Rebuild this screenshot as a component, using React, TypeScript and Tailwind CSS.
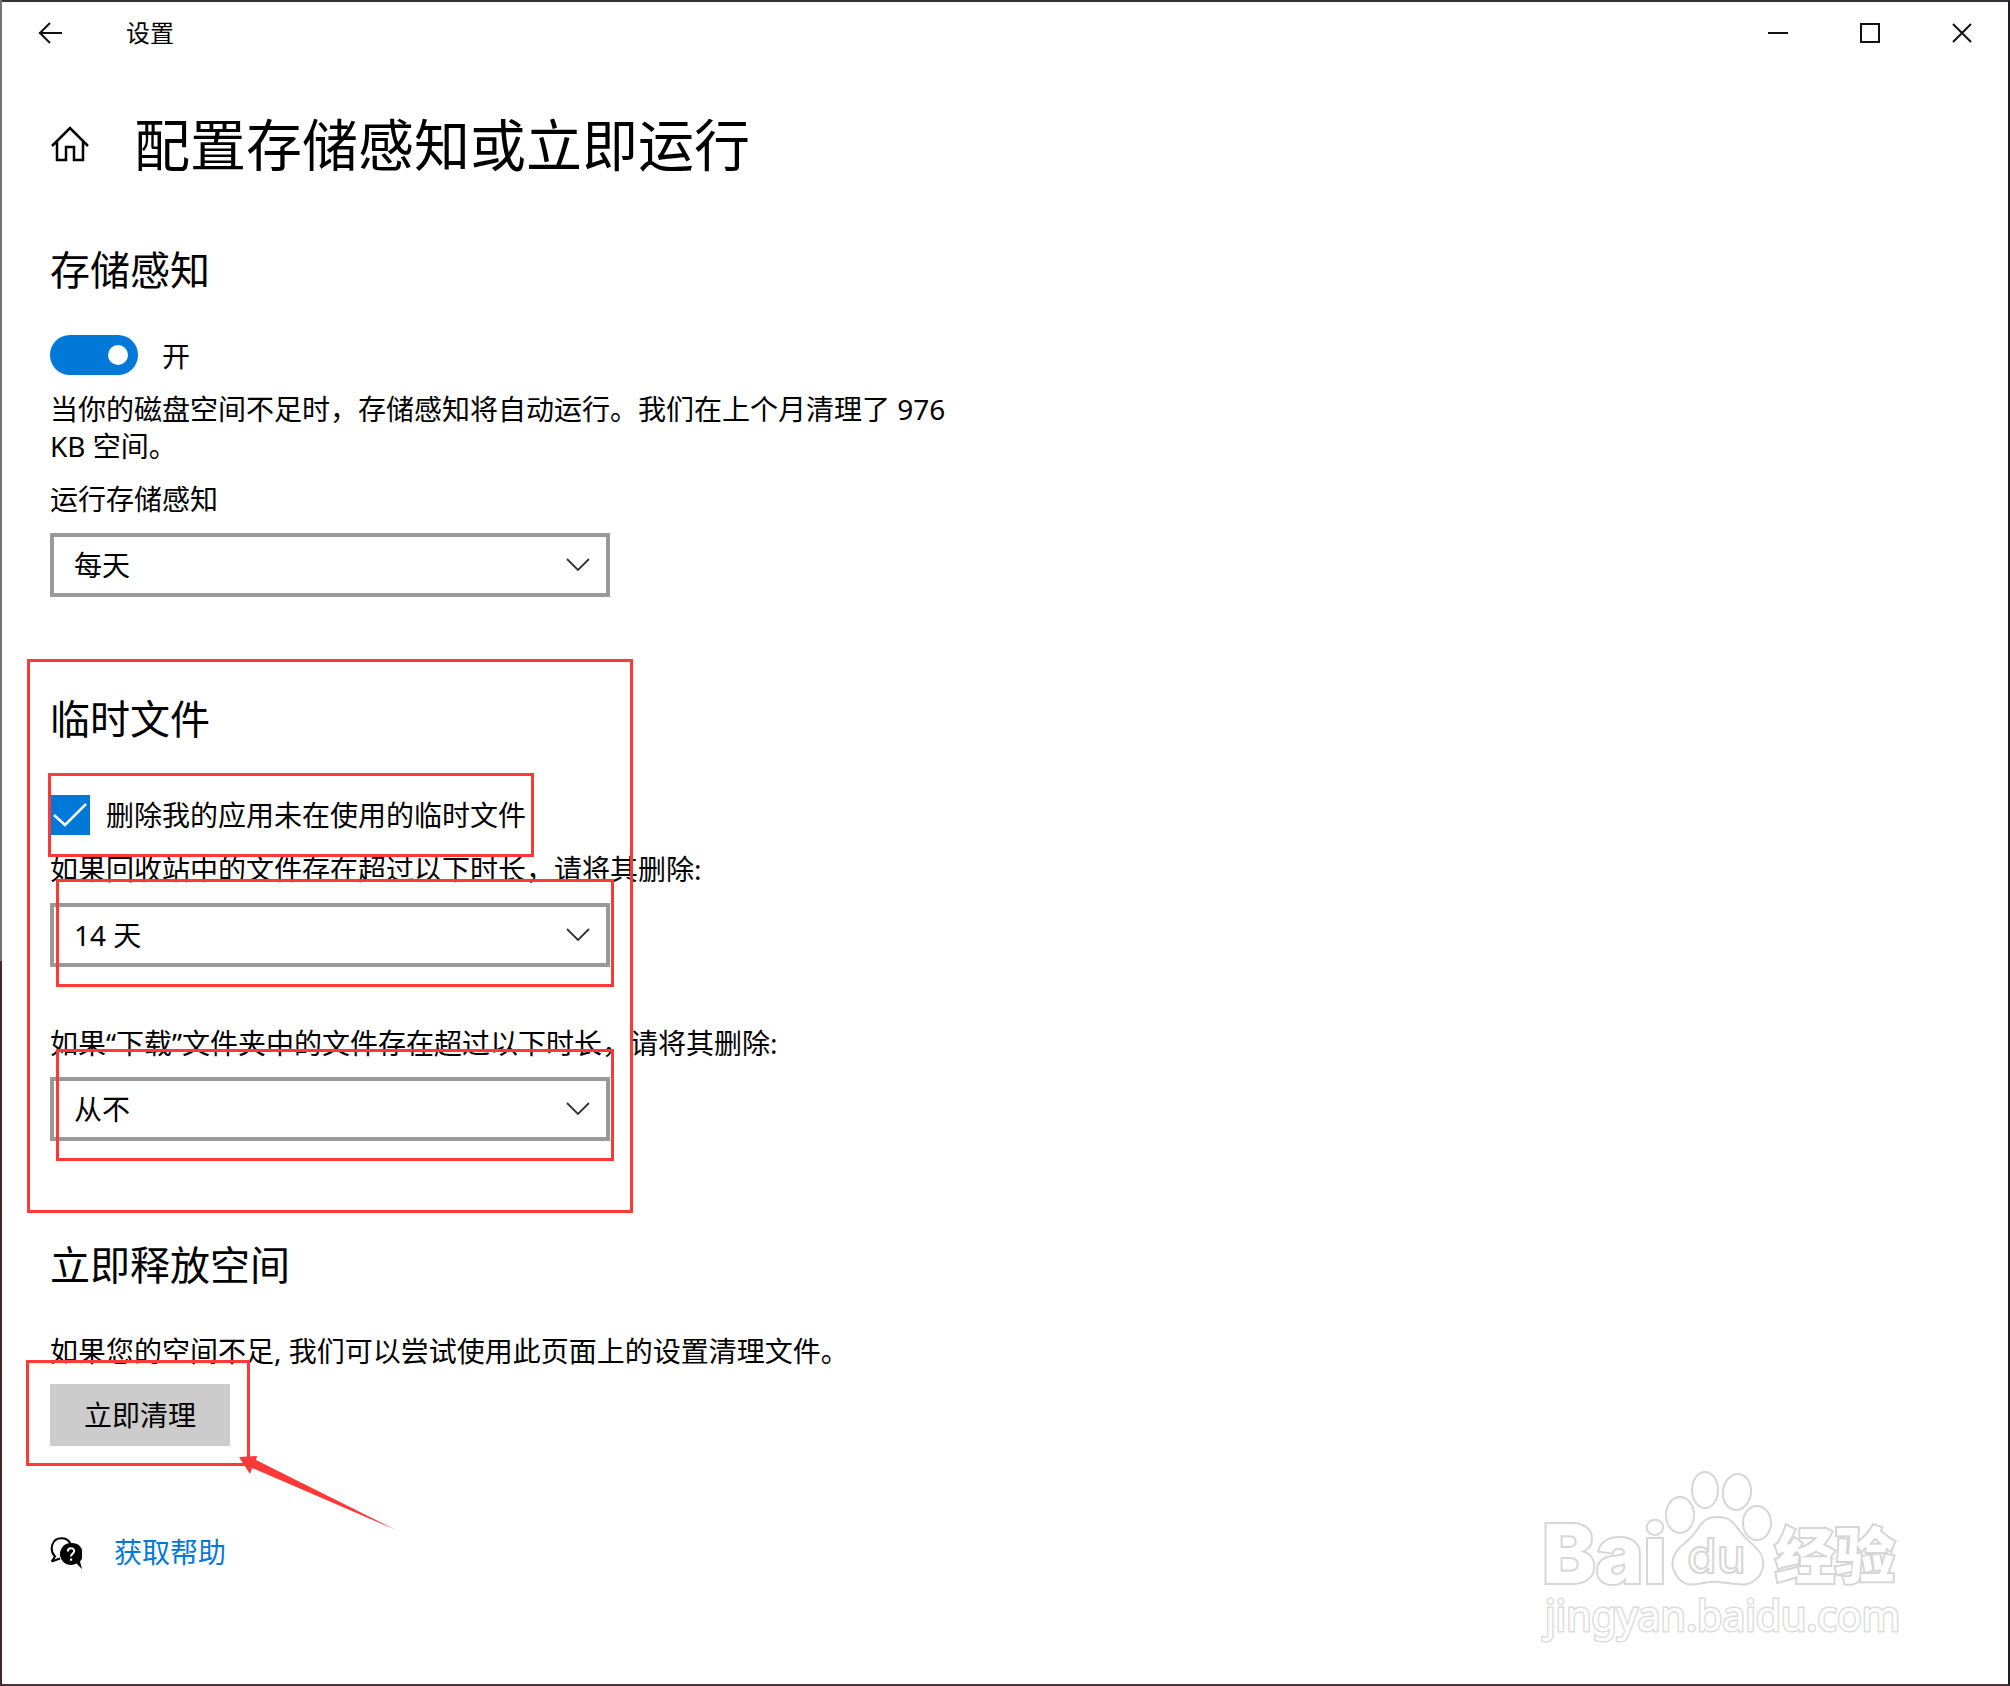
import { useState, type ReactNode } from 'react';

type SelectFieldProps = {
  id: string;
  label: string;
  value: string;
  options: string[];
  marker?: ReactNode;
  onChange: (value: string) => void;
};

const RUN_OPTIONS = ['每天', '每周', '每月', '可用磁盘空间不足时'];
const RECYCLE_OPTIONS = ['从不', '1 天', '14 天', '30 天', '60 天'];
const DOWNLOAD_OPTIONS = ['从不', '1 天', '14 天', '30 天', '60 天'];

// red rectangle drawn over the content
function Marker({ className }: { className: string }) {
  return <div className={`pointer-events-none absolute border-3 border-[#ff3838] ${className}`} />;
}

function SelectField({ id, label, value, options, marker, onChange }: SelectFieldProps) {
  return (
    <div className="flex flex-col gap-4">
      <label htmlFor={id} className="leading-9">{label}</label>
      <div className="relative w-[560px] max-w-full">
        <select
          id={id}
          value={value}
          onChange={(e) => onChange(e.target.value)}
          className="block h-16 w-full appearance-none border-4 border-[#999] bg-white pl-5 pr-16 outline-none"
        >
          {options.map((o) => <option key={o}>{o}</option>)}
        </select>
        <svg className="pointer-events-none absolute right-5 top-6 h-4 w-6" viewBox="0 0 24 16" fill="none" stroke="#333" strokeWidth="1.800">
          <path d="M1 2l11 11L23 2" />
        </svg>
        {marker}
      </div>
    </div>
  );
}

function TitleBar() {
  return (
    <header className="flex h-[62px] items-center justify-between">
      <div className="flex items-center">
        <button type="button" aria-label="返回" className="flex h-full w-24 items-center justify-center">
          <svg className="h-6 w-6" viewBox="0 0 24 24" fill="none" stroke="#111" strokeWidth="2">
            <path d="M24 12H1M12 2L2 12l10 10" />
          </svg>
        </button>
        <span className="pl-7 text-2xl">设置</span>
      </div>
      <div className="flex">
        <button type="button" aria-label="最小化" className="flex h-full w-23 items-center justify-center">
          <svg className="h-5 w-5" viewBox="0 0 20 20" stroke="#111" strokeWidth="2"><path d="M0 10h20" /></svg>
        </button>
        <button type="button" aria-label="最大化" className="flex h-full w-23 items-center justify-center">
          <svg className="h-5 w-5" viewBox="0 0 20 20" fill="none" stroke="#111" strokeWidth="2"><path d="M1 1h18v18H1z" /></svg>
        </button>
        <button type="button" aria-label="关闭" className="flex h-full w-23 items-center justify-center">
          <svg className="h-5 w-5" viewBox="0 0 20 20" stroke="#111" strokeWidth="2"><path d="M1 1l18 18M19 1L1 19" /></svg>
        </button>
      </div>
    </header>
  );
}

function HelpIcon() {
  return (
    <svg className="h-8 w-8" viewBox="0 0 32 32">
      <path d="M1.500 24.500L5 19.500C-1 13 1.500 1.200 11.500 1.200c5 0 7.600 2.500 8.800 5.300M1.500 24.500L10 21.500" fill="none" stroke="#000" strokeWidth="2" />
      <path d="M21 6a11 11 0 1 0 5.500 20.500L32 32l-2-7.500A11 11 0 0 0 21 6z" />
      <path d="M17.800 14.500c0-4.500 6.600-4.200 6.400-.4-.1 2.300-3.200 2.400-3.200 5.400" fill="none" stroke="#fff" strokeWidth="2" />
      <path d="M20 21.500h2.200v2.200H20z" fill="#fff" />
    </svg>
  );
}

function Watermark() {
  return (
    <svg
      className="pointer-events-none absolute bottom-9 right-22 h-45 w-100"
      viewBox="0 0 400 180"
      fill="#fff"
      stroke="#d6d6d6"
      strokeWidth="2"
      aria-label="Baidu 经验"
    >
      <g strokeWidth="4" paintOrder="stroke">
        <text x="22" y="115" fontFamily="Inter, 'Liberation Sans', sans-serif" fontSize="81" fontWeight="800">Bai</text>
        <text x="255" y="110" fontFamily="'Noto Sans CJK SC', sans-serif" fontSize="60" fontWeight="900">经验</text>
      </g>
      <ellipse cx="160" cy="47" rx="14" ry="18" />
      <ellipse cx="185" cy="22" rx="13" ry="18" />
      <ellipse cx="217" cy="24" rx="14" ry="18" transform="rotate(8 217 24)" />
      <ellipse cx="237" cy="55" rx="14" ry="17" />
      <path d="M198 49c-20 0-16 13-33 26-12 9-16 20-9 32 12 18 25 5 42 7 17 1 31 8 42-7 8-14 1-24-9-32-16-13-15-26-33-26z" />
      <text x="167" y="105" fontFamily="Inter, sans-serif" fontSize="48" fontWeight="500" strokeWidth="2">du</text>
      <text x="25" y="163" fontFamily="'Noto Sans', sans-serif" fontSize="41" strokeWidth="3" stroke="#dcdcdc" paintOrder="stroke">jingyan.baidu.com</text>
    </svg>
  );
}

export default function App() {
  const [enabled, setEnabled] = useState(true);
  const [cleanTemp, setCleanTemp] = useState(true);
  const [runWhen, setRunWhen] = useState('每天');
  const [recycle, setRecycle] = useState('14 天');
  const [downloads, setDownloads] = useState('从不');

  return (
    <div
      lang="zh-CN"
      className="flex min-h-screen bg-linear-to-b from-[#747476] from-57% to-[#45282c] to-57% pl-0.5 font-['Noto_Sans','Noto_Sans_CJK_SC',sans-serif] text-[28px] leading-[37px] text-black"
    >
      <div className="relative min-w-0 flex-1 overflow-hidden border-y-2 border-r-2 border-b-[#4a3336] border-r-[#1e1c24] border-t-[#333] bg-white">
        <TitleBar />

        <main className="px-12">
          <div className="flex items-center gap-11 pt-10">
            <svg className="h-9 w-10" viewBox="0 0 40 36" fill="none" stroke="#000" strokeWidth="2.500">
              <path d="M2 20L20 2l18 18M7 16v18h9V21h8v13h9V16" />
            </svg>
            <h1 className="text-[56px] leading-20">配置存储感知或立即运行</h1>
          </div>

          <section className="pt-[58px]">
            <h2 className="text-[40px] leading-14">存储感知</h2>
            <label className="mt-9 flex w-fit items-center gap-6">
              <input
                type="checkbox"
                role="switch"
                checked={enabled}
                onChange={(e) => setEnabled(e.target.checked)}
                className="h-10 w-22 appearance-none rounded-full bg-[#999] p-[10px] before:block before:size-5 before:rounded-full before:bg-white checked:bg-[#0078d7] checked:before:ml-auto"
              />
              <span className="pt-1">{enabled ? '开' : '关'}</span>
            </label>
            <p className="mt-4 max-w-[910px]">
              当你的磁盘空间不足时，存储感知将自动运行。我们在上个月清理了 976 KB 空间。
            </p>
            <div className="mt-4">
              <SelectField id="run" label="运行存储感知" value={runWhen} options={RUN_OPTIONS} onChange={setRunWhen} />
            </div>
          </section>

          <section className="relative mt-[62px] pb-18 pt-8">
            <Marker className="inset-y-0 -left-[23px] w-[606px]" />
            <h2 className="text-[40px] leading-14">临时文件</h2>
            <label className="relative mt-12 flex w-fit items-center gap-4">
              <span className="relative size-10">
                <input
                  type="checkbox"
                  checked={cleanTemp}
                  onChange={(e) => setCleanTemp(e.target.checked)}
                  className="block size-10 appearance-none border-4 border-[#999] checked:border-0 checked:bg-[#0078d7]"
                />
                <svg className="pointer-events-none absolute inset-0 size-10" viewBox="0 0 40 40" fill="none" stroke="#fff" strokeWidth="2.500">
                  <path d="M4 20l11 10L36 9" />
                </svg>
              </span>
              <span>删除我的应用未在使用的临时文件</span>
              <Marker className="-inset-y-[22px] -left-0.5 -right-2" />
            </label>
            <div className="mt-4 flex flex-col gap-[58px]">
              <SelectField
                id="recycle"
                label="如果回收站中的文件存在超过以下时长，请将其删除:"
                value={recycle}
                options={RECYCLE_OPTIONS}
                onChange={setRecycle}
                marker={<Marker className="-bottom-5 -right-1 -top-6 left-1.5" />}
              />
              <SelectField
                id="downloads"
                label="如果“下载”文件夹中的文件存在超过以下时长，请将其删除:"
                value={downloads}
                options={DOWNLOAD_OPTIONS}
                onChange={setDownloads}
                marker={<Marker className="-bottom-5 -right-1 -top-7 left-1.5" />}
              />
            </div>
          </section>

          <section className="pt-6">
            <h2 className="text-[40px] leading-14">立即释放空间</h2>
            <p className="mt-10">如果您的空间不足, 我们可以尝试使用此页面上的设置清理文件。</p>
            <div className="relative mt-[14px] w-fit">
              <button type="button" className="h-[62px] w-45 bg-[#ccc]">立即清理</button>
              <Marker className="-bottom-5 -left-6 -right-5 -top-6" />
              <svg className="pointer-events-none absolute left-full top-full ml-2 mt-2 h-20 w-42" viewBox="0 0 168 80" fill="#ff3838">
                <path d="M1 3L19 2l-1 4L158 76 14 14l-2 6z" />
              </svg>
            </div>
          </section>

          <footer className="flex items-center gap-8 pb-24 pt-22">
            <HelpIcon />
            <a href="#help" className="text-[#0078d7]">获取帮助</a>
          </footer>
        </main>

        <Watermark />
      </div>
    </div>
  );
}
